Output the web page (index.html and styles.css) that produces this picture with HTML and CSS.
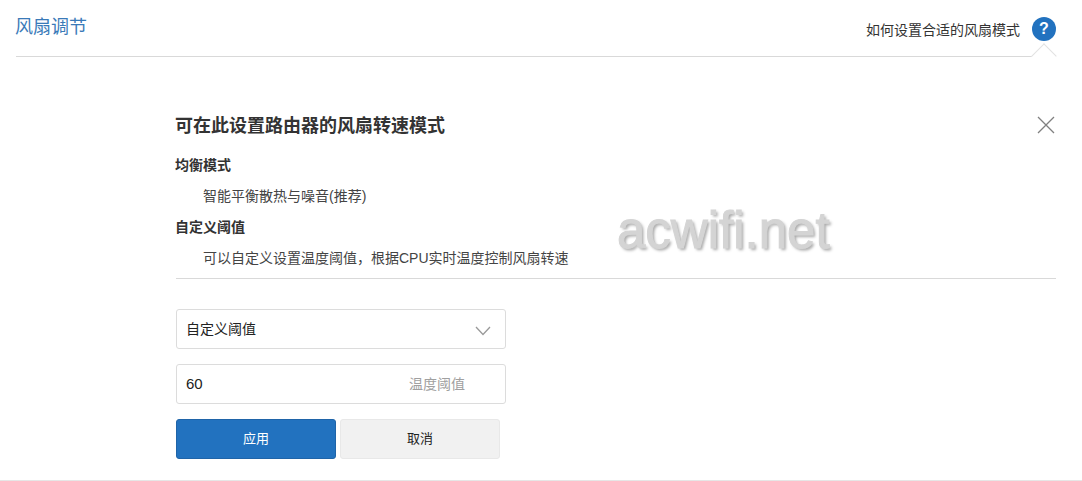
FILE: index.html
```html
<!DOCTYPE html>
<html>

<head>
    <meta charset="UTF-8" />
    <title>风扇调节</title>
    <link rel="stylesheet" href="styles.css">
</head>

<body>
    <div class="page">
        <div class="header">
            <span class="page-title">风扇调节</span>
            <div class="help">
                <span class="help-text">如何设置合适的风扇模式</span>
                <span class="help-icon">?</span>
            </div>
            <span class="notch"></span>
        </div>

        <div class="panel">
            <div class="tips">
                <div class="tips-head">
                    <h2>可在此设置路由器的风扇转速模式</h2>
                    <svg class="close" width="18" height="18" viewBox="0 0 18 18">
                        <path d="M1 1L17 17M17 1L1 17" stroke="#808080" stroke-width="1.3" fill="none" />
                    </svg>
                </div>
                <h3>均衡模式</h3>
                <p>智能平衡散热与噪音(推荐)</p>
                <h3>自定义阈值</h3>
                <p>可以自定义设置温度阈值，根据CPU实时温度控制风扇转速</p>
            </div>

            <div class="form">
                <div class="field select">
                    <span class="label">自定义阈值</span>
                    <svg class="chevron" width="16" height="10" viewBox="0 0 16 10">
                        <path d="M1 1L8 8.5L15 1" stroke="#999" stroke-width="1.3" fill="none" />
                    </svg>
                </div>
                <div class="field input">
                    <span class="value">60</span>
                    <span class="unit">温度阈值</span>
                </div>
                <div class="buttons">
                    <button class="btn primary">应用</button>
                    <button class="btn">取消</button>
                </div>
            </div>
        </div>
        <div class="watermark">acwifi.net</div>
    </div>
</body>

</html>
```

FILE: styles.css
```css
body {
    margin: 0;
    background-color: #fff;
    color: #333;
    font-family: "Liberation Sans", "Noto Sans CJK SC", sans-serif;
    font-size: 14px;
}

.page {
    position: relative;
    height: 480px;
    border-bottom: 1px solid #e6e6e6;
    overflow: hidden;
}

.header {
    position: relative;
    display: flex;
    justify-content: space-between;
    align-items: flex-start;
    height: 56px;
    margin: 0 26px 0 16px;
    border-bottom: 1px solid #d9d9d9;
}

.page-title {
    margin-top: 15px;
    margin-left: -1px;
    font-size: 18px;
    line-height: 24px;
    color: #3a7ab8;
}

.help {
    display: flex;
    align-items: center;
    margin-top: 17px;
}

.help-text {
    margin-left: -1px;
    font-size: 14px;
    color: #333;
}

.help-icon {
    width: 24px;
    height: 24px;
    margin-left: 12px;
    border-radius: 50%;
    background-color: #2272bf;
    color: #fff;
    font-size: 16px;
    font-weight: bold;
    line-height: 24px;
    text-align: center;
}

/* little arrow under the help icon */
.notch {
    position: absolute;
    right: 3px;
    bottom: -9px;
    width: 17px;
    height: 17px;
    background-color: #fff;
    border-top: 1px solid #e2e2e2;
    border-left: 1px solid #e2e2e2;
    transform: rotate(45deg);
}

.panel {
    padding: 0 26px 0 176px;
}

.tips {
    border-bottom: 1px solid #d9d9d9;
    padding-bottom: 10px;
}

.tips-head {
    display: flex;
    justify-content: space-between;
    align-items: center;
    margin-top: 56px;
    margin-bottom: 18px;
    height: 24px;
}

.tips-head h2 {
    margin: -2px 0 0 -1px;
    font-size: 18px;
    font-weight: bold;
    color: #333;
}

.close {
    margin-right: 1px;
}

.tips h3 {
    margin: 0 0 0 -1px;
    font-size: 14px;
    line-height: 20px;
    font-weight: bold;
    color: #333;
}

.tips p {
    margin: 11px 0;
    padding-left: 27px;
    font-size: 14px;
    line-height: 20px;
    color: #444;
}

.tips p:last-child {
    margin-bottom: 0;
}

.form {
    width: 330px;
    padding-top: 30px;
}

.field {
    display: flex;
    align-items: center;
    box-sizing: border-box;
    height: 40px;
    margin-bottom: 15px;
    padding: 0 10px;
    border: 1px solid #dcdcdc;
    border-radius: 3px;
    font-size: 14px;
    color: #222;
}

.select {
    justify-content: space-between;
    padding-right: 14px;
}

.label {
    margin: -2px 0 0 -1px;
}

.chevron {
    margin-top: 3px;
}

.input {
    justify-content: space-between;
    padding-right: 39px;
}

.value {
    margin: -2px 0 0 -1px;
    font-size: 15px;
}

.unit {
    margin-top: -2px;
    padding-right: 1px;
    color: #a0a0a0;
}

.buttons {
    display: flex;
    gap: 4px;
}

.btn {
    width: 160px;
    height: 40px;
    padding: 0 0 3px;
    border: 1px solid #e8e8e8;
    border-radius: 3px;
    background-color: #f1f1f1;
    color: #222;
    font-family: inherit;
    font-size: 13px;
}

.primary {
    border-color: #1f64a8;
    background-color: #2272bf;
    color: #fff;
}

.watermark {
    position: absolute;
    left: 617px;
    top: 201px;
    font-family: "Liberation Sans", sans-serif;
    font-size: 51px;
    line-height: 60px;
    color: #d4d4d4;
    -webkit-text-stroke: 1px #d4d4d4;
    text-shadow: 2px 2px 3px #a8a8a8;
}
```
